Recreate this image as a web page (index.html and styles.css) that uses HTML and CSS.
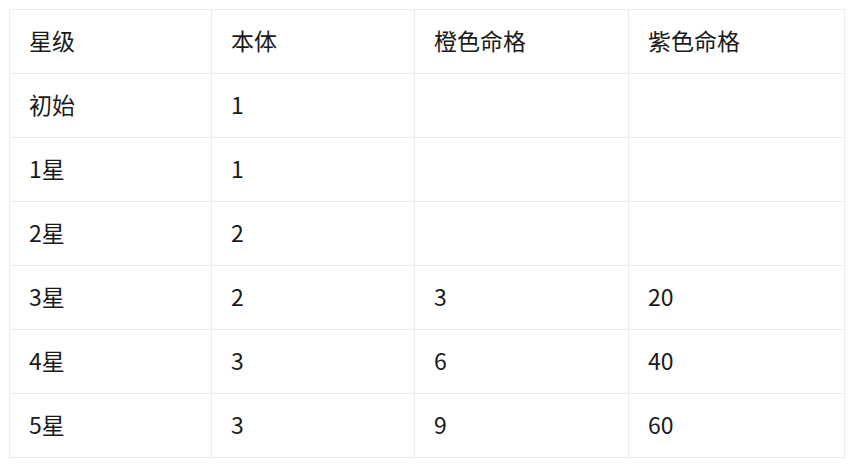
FILE: index.html
```html
<!DOCTYPE html>
<html lang="zh">
<head>
<meta charset="utf-8">
<link rel="stylesheet" href="styles.css">
</head>
<body>
<table class="star-table">
  <colgroup>
    <col class="c1"><col class="c2"><col class="c3"><col class="c4">
  </colgroup>
  <tr><td>星级</td><td>本体</td><td>橙色命格</td><td>紫色命格</td></tr>
  <tr><td>初始</td><td>1</td><td></td><td></td></tr>
  <tr><td>1星</td><td>1</td><td></td><td></td></tr>
  <tr><td>2星</td><td>2</td><td></td><td></td></tr>
  <tr><td>3星</td><td>2</td><td>3</td><td>20</td></tr>
  <tr><td>4星</td><td>3</td><td>6</td><td>40</td></tr>
  <tr><td>5星</td><td>3</td><td>9</td><td>60</td></tr>
</table>
</body>
</html>
```
FILE: styles.css
```css
html, body {
  margin: 0;
  background: #ffffff;
}
body {
  padding: 9px 0 0 9px;
  font-family: "Noto Sans CJK SC", "Noto Sans", sans-serif;
  color: #1a1a1a;
}
.star-table {
  border-collapse: collapse;
  table-layout: fixed;
  width: 835px;
}
.c1 { width: 202px; }
.c2 { width: 203px; }
.c3 { width: 214px; }
.c4 { width: 216px; }
.star-table td {
  border: 1px solid #ececec;
  height: 64px;
  padding: 0 0 3px 19px;
  font-size: 23px;
  line-height: 30px;
  vertical-align: middle;
  box-sizing: border-box;
}
```
